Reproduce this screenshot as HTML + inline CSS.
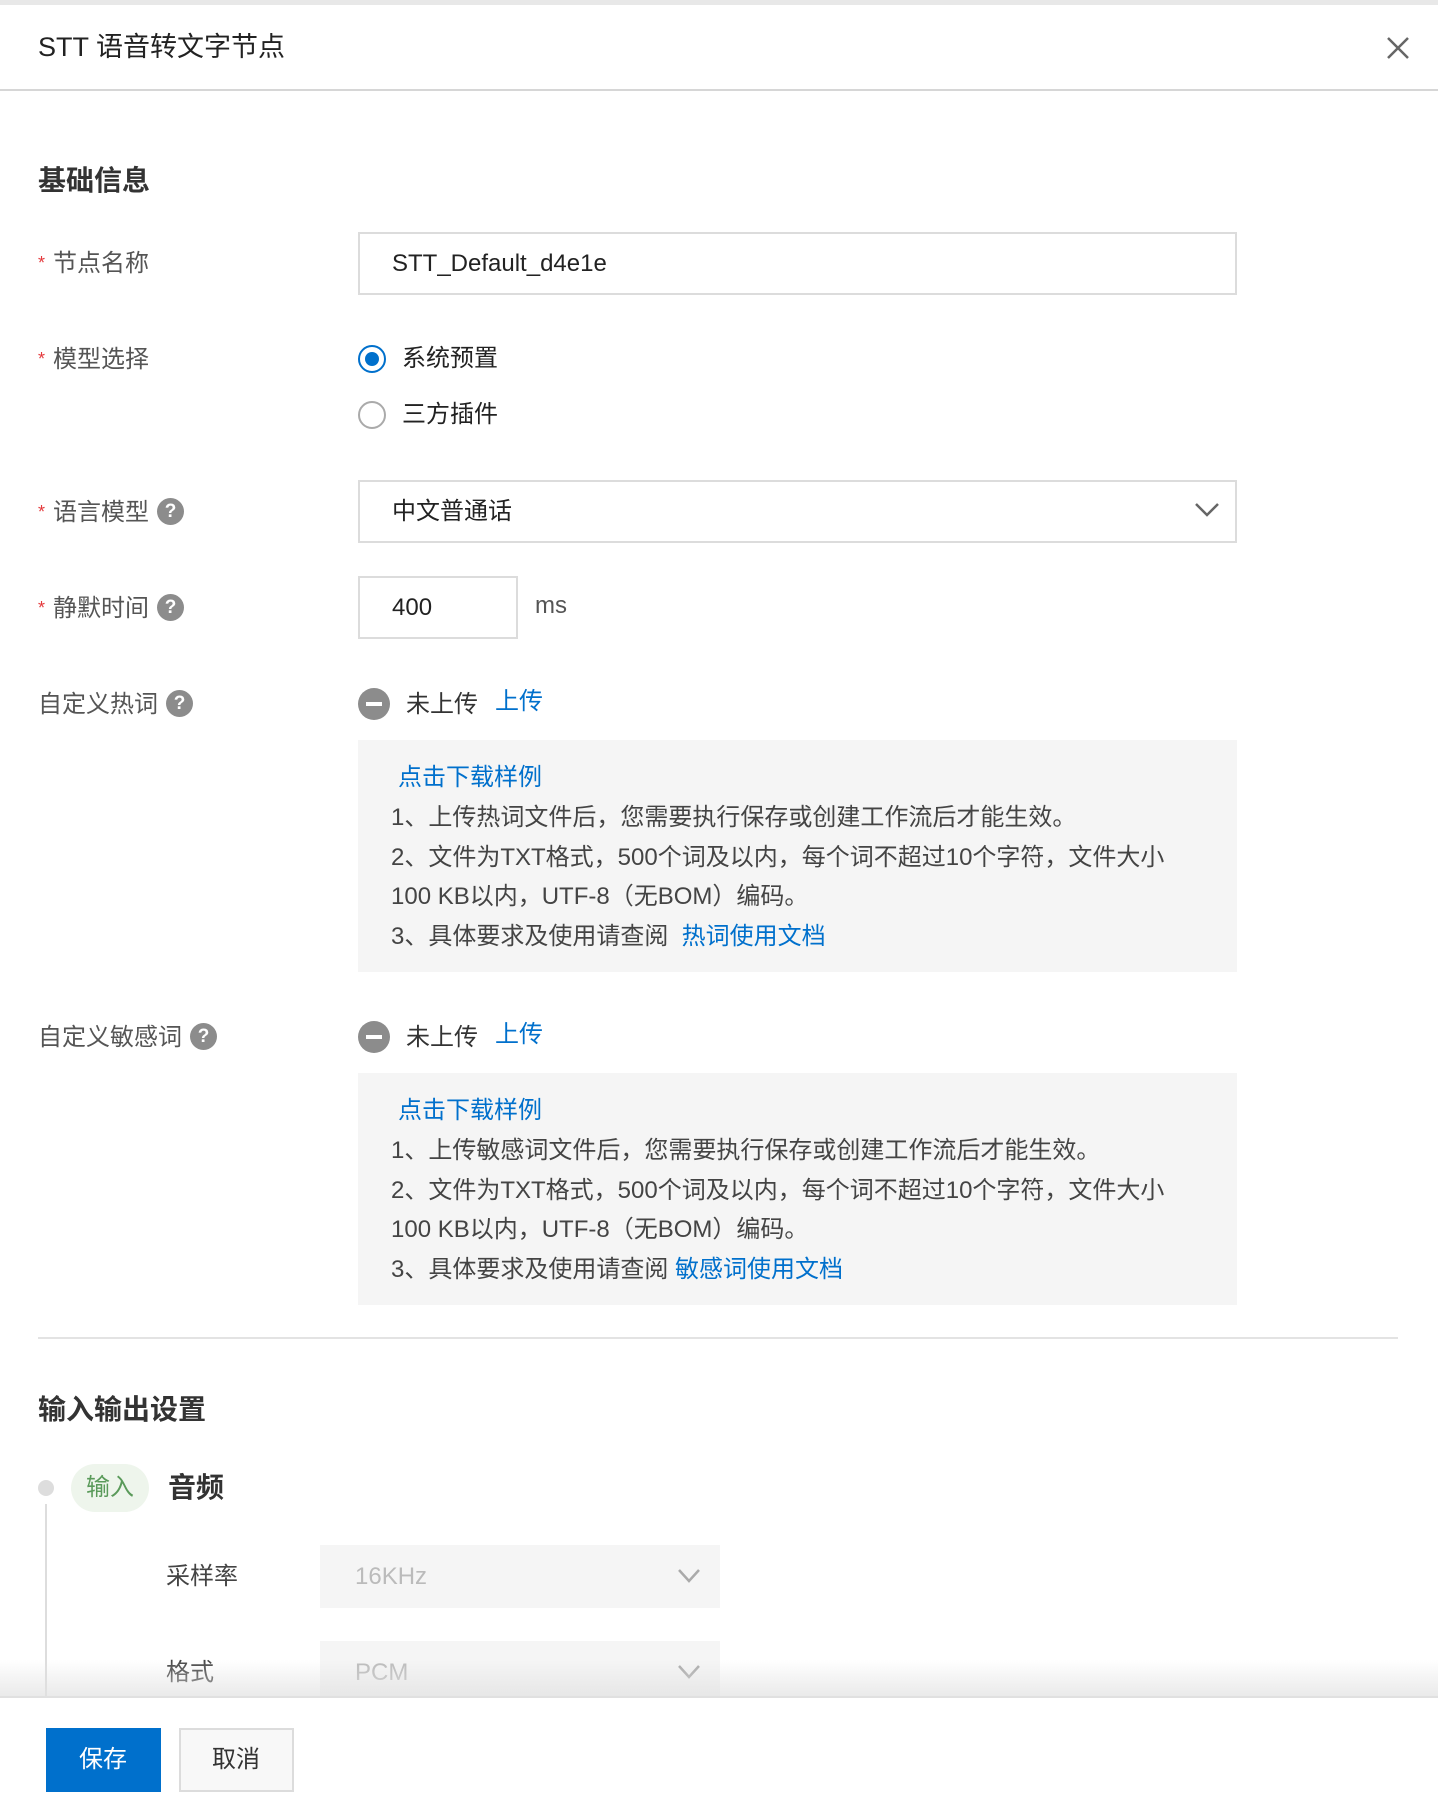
<!DOCTYPE html>
<html><head><meta charset="utf-8"><style>
*{margin:0;padding:0;box-sizing:border-box}
body{width:1438px;height:1800px;position:relative;overflow:hidden;background:#fff;font-family:"Liberation Sans","Noto Sans CJK SC",sans-serif;color:#333;font-size:24px}
.a{position:absolute;white-space:nowrap;line-height:1}
.lbl{color:#555}
.star{color:#e4393c;font-size:18px;margin-right:8px;position:relative;top:-2px}
.q{display:inline-block;width:27px;height:27px;border-radius:50%;background:#8c8c8c;color:#fff;font-size:19px;font-weight:bold;text-align:center;line-height:27px;vertical-align:middle;margin-left:8px;position:relative;top:-2px}
.box{position:absolute;border:2px solid #dcdcdc;background:#fff}
.blue{color:#0070cc}
.tip{position:absolute;left:358px;width:879px;height:232px;background:#f5f5f5}
.tip div{position:absolute;left:33px;white-space:nowrap;line-height:1;color:#444}
.tip div.blue,.tip .blue{color:#0070cc}
.minus{position:absolute;width:32px;height:32px;border-radius:50%;background:#8c8c8c}
.minus:after{content:"";position:absolute;left:8px;top:14px;width:16px;height:4px;background:#fff}
</style></head><body>
<div style="position:absolute;left:0;top:0;width:1438px;height:5px;background:#e8e8e8"></div>
<div class="a" style="left:38px;top:34px;font-size:27px;color:#222">STT 语音转文字节点</div>
<svg style="position:absolute;left:1386px;top:36px" width="24" height="24"><path d="M2 2L22 22M22 2L2 22" stroke="#666" stroke-width="2.5"/></svg>
<div style="position:absolute;left:0;top:89px;width:1438px;height:2px;background:#d6d6d6"></div>

<div class="a" style="left:38px;top:167px;font-size:28px;font-weight:bold;color:#333">基础信息</div>

<div class="a lbl" style="left:38px;top:252px"><span class="star">*</span>节点名称</div>
<div class="box" style="left:358px;top:232px;width:879px;height:63px"></div>
<div class="a" style="left:392px;top:252px;color:#222">STT_Default_d4e1e</div>

<div class="a lbl" style="left:38px;top:348px"><span class="star">*</span>模型选择</div>
<div style="position:absolute;left:358px;top:345px;width:28px;height:28px;border-radius:50%;border:2px solid #0070cc"></div>
<div style="position:absolute;left:365px;top:352px;width:14px;height:14px;border-radius:50%;background:#0070cc"></div>
<div class="a" style="left:402px;top:347px;color:#222">系统预置</div>
<div style="position:absolute;left:358px;top:401px;width:28px;height:28px;border-radius:50%;border:2px solid #aaa"></div>
<div class="a" style="left:402px;top:403px;color:#222">三方插件</div>

<div class="a lbl" style="left:38px;top:500px"><span class="star">*</span>语言模型<span class="q">?</span></div>
<div class="box" style="left:358px;top:480px;width:879px;height:63px"></div>
<div class="a" style="left:392px;top:500px;color:#222">中文普通话</div>
<svg style="position:absolute;left:1194px;top:502px" width="26" height="16"><path d="M2 2L13 13L24 2" stroke="#666" stroke-width="2.5" fill="none"/></svg>

<div class="a lbl" style="left:38px;top:596px"><span class="star">*</span>静默时间<span class="q">?</span></div>
<div class="box" style="left:358px;top:576px;width:160px;height:63px"></div>
<div class="a" style="left:392px;top:596px;color:#222">400</div>
<div class="a" style="left:535px;top:594px;color:#555">ms</div>

<div class="a lbl" style="left:38px;top:692px">自定义热词<span class="q">?</span></div>
<div class="minus" style="left:358px;top:688px"></div>
<div class="a" style="left:406px;top:693px;color:#333">未上传</div>
<div class="a blue" style="left:495px;top:690px">上传</div>
<div class="tip" style="top:740px">
<div class="blue" style="top:26px;left:40px">点击下载样例</div>
<div style="top:66px">1、上传热词文件后，您需要执行保存或创建工作流后才能生效。</div>
<div style="top:106px">2、文件为TXT格式，500个词及以内，每个词不超过10个字符，文件大小</div>
<div style="top:145px">100 KB以内，UTF-8（无BOM）编码。</div>
<div style="top:185px">3、具体要求及使用请查阅 <span class="blue">&nbsp;热词使用文档</span></div>
</div>

<div class="a lbl" style="left:38px;top:1025px">自定义敏感词<span class="q">?</span></div>
<div class="minus" style="left:358px;top:1021px"></div>
<div class="a" style="left:406px;top:1026px;color:#333">未上传</div>
<div class="a blue" style="left:495px;top:1023px">上传</div>
<div class="tip" style="top:1073px">
<div class="blue" style="top:26px;left:40px">点击下载样例</div>
<div style="top:66px">1、上传敏感词文件后，您需要执行保存或创建工作流后才能生效。</div>
<div style="top:106px">2、文件为TXT格式，500个词及以内，每个词不超过10个字符，文件大小</div>
<div style="top:145px">100 KB以内，UTF-8（无BOM）编码。</div>
<div style="top:185px">3、具体要求及使用请查阅 <span class="blue">敏感词使用文档</span></div>
</div>

<div style="position:absolute;left:38px;top:1337px;width:1360px;height:2px;background:#e3e3e3"></div>
<div class="a" style="left:38px;top:1396px;font-size:28px;font-weight:bold;color:#333">输入输出设置</div>

<div style="position:absolute;left:38px;top:1480px;width:16px;height:16px;border-radius:50%;background:#ddd"></div>
<div style="position:absolute;left:45px;top:1504px;width:2px;height:200px;background:#ddd"></div>
<div style="position:absolute;left:71px;top:1464px;width:78px;height:48px;border-radius:24px;background:#eef5ec"></div>
<div class="a" style="left:86px;top:1476px;color:#5a9a5a">输入</div>
<div class="a" style="left:168px;top:1474px;font-size:28px;font-weight:bold;color:#333">音频</div>

<div class="a" style="left:166px;top:1565px;color:#444">采样率</div>
<div style="position:absolute;left:320px;top:1545px;width:400px;height:63px;background:#f5f5f5"></div>
<div class="a" style="left:355px;top:1565px;color:#bbb">16KHz</div>
<svg style="position:absolute;left:677px;top:1568px" width="24" height="16"><path d="M2 2L12 13L22 2" stroke="#aaa" stroke-width="2.5" fill="none"/></svg>

<div class="a" style="left:166px;top:1661px;color:#444">格式</div>
<div style="position:absolute;left:320px;top:1641px;width:400px;height:63px;background:#f5f5f5"></div>
<div class="a" style="left:355px;top:1661px;color:#bbb">PCM</div>
<svg style="position:absolute;left:677px;top:1664px" width="24" height="16"><path d="M2 2L12 13L22 2" stroke="#aaa" stroke-width="2.5" fill="none"/></svg>

<div style="position:absolute;left:0;top:1660px;width:1438px;height:36px;background:linear-gradient(rgba(255,255,255,0),rgba(225,225,225,.7))"></div>
<div style="position:absolute;left:0;top:1696px;width:1438px;height:104px;background:#fff;border-top:2px solid #e0e0e0"></div>
<div style="position:absolute;left:46px;top:1728px;width:115px;height:64px;background:#0070cc"></div>
<div class="a" style="left:79px;top:1748px;color:#fff">保存</div>
<div style="position:absolute;left:179px;top:1728px;width:115px;height:64px;background:#f8f8f8;border:2px solid #dcdcdc"></div>
<div class="a" style="left:212px;top:1748px;color:#333">取消</div>
</body></html>
